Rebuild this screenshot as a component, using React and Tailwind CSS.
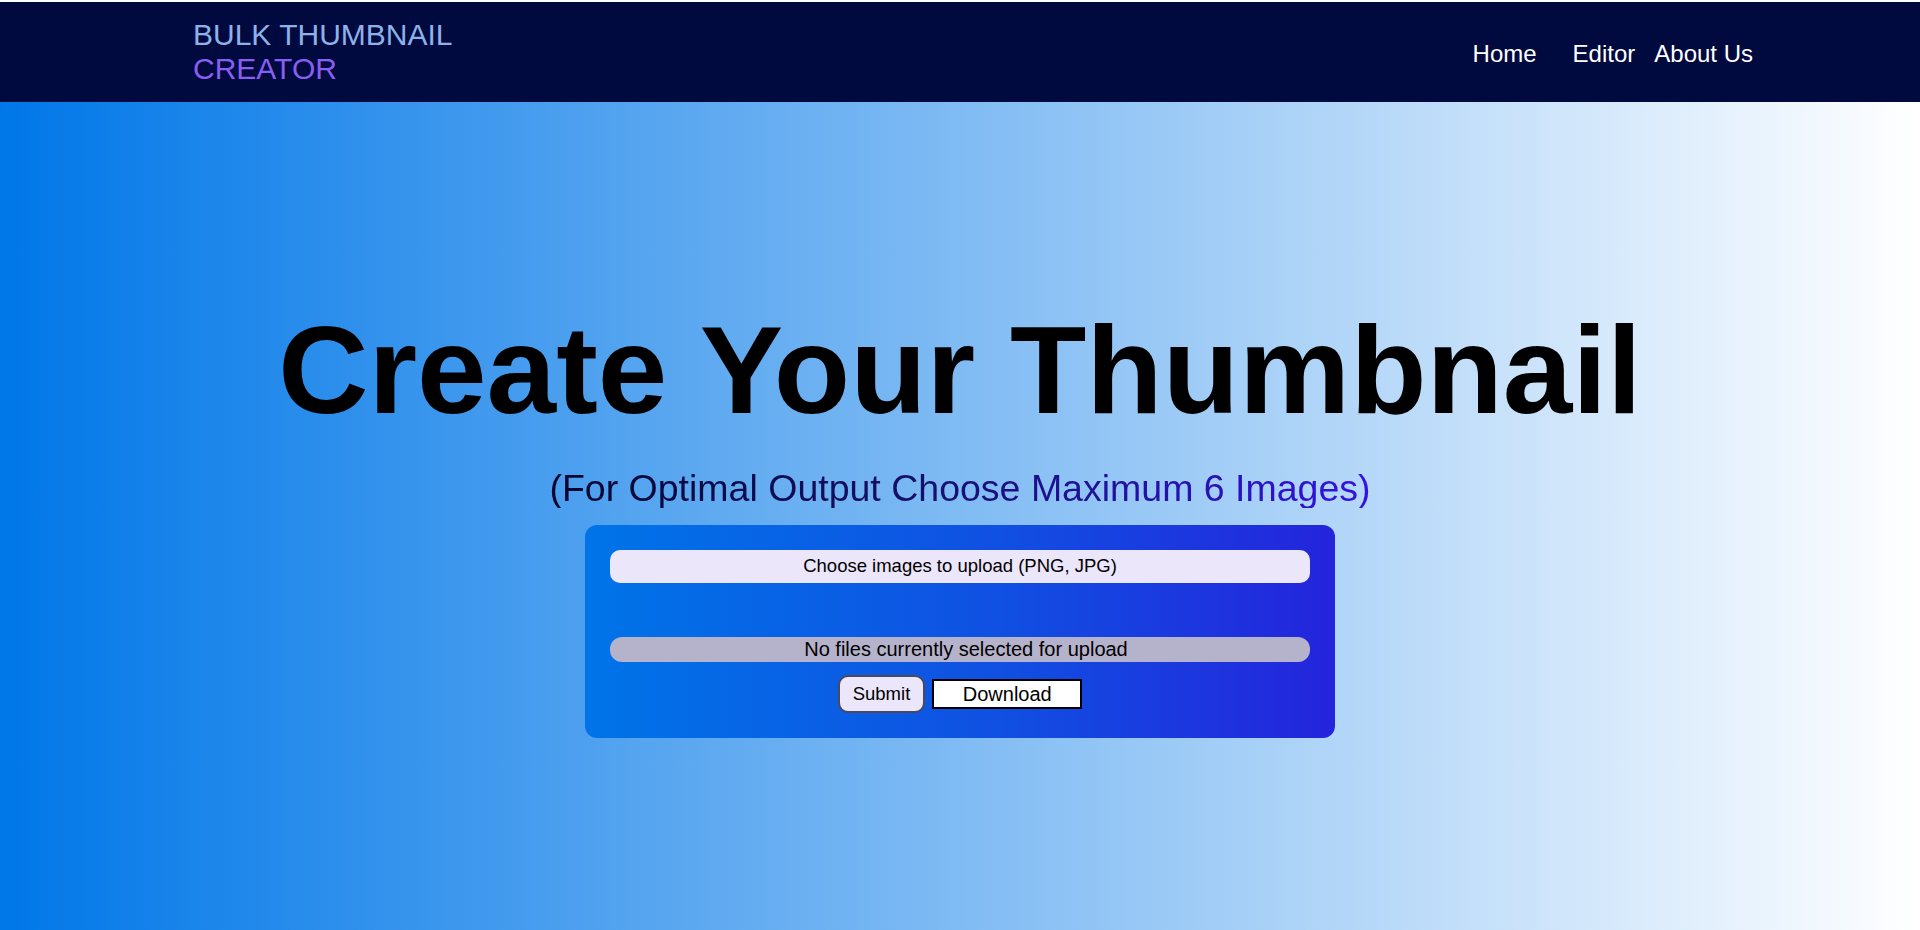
import React from 'react';

export default function App() {
  return (
    <div className="min-h-[930px] flex flex-col bg-white font-['Liberation_Sans',Arial,sans-serif]">
      {/* Top bar */}
      <header className="mt-[2px] h-[100px] shrink-0 bg-[#000a3e] flex items-center justify-between pl-[193px] pr-[167px]">
        <div className="text-[30px] leading-[34px]">
          <div className="text-[#8fb1ea]">BULK THUMBNAIL</div>
          <div className="text-[#8a5ef2]">CREATOR</div>
        </div>
        <nav className="mt-[4px] flex items-center text-white text-[24px]">
          <a href="#" className="mr-[36px]">Home</a>
          <a href="#" className="mr-[19px]">Editor</a>
          <a href="#">About Us</a>
        </nav>
      </header>

      {/* Hero */}
      <main className="flex-1 flex flex-col items-center pt-[205px] bg-[linear-gradient(to_right,#0077e8,#ffffff)]">
        <h1 className="text-[125px] leading-none font-bold text-black">Create Your Thumbnail</h1>
        <p className="mt-[38px] text-[37.5px] leading-none bg-[linear-gradient(to_right,#06062e,#15106a_45%,#3412e2)] bg-clip-text text-transparent">
          (For Optimal Output Choose Maximum 6 Images)
        </p>

        <div className="mt-[17px] w-[750px] rounded-[12px] p-[25px] bg-[linear-gradient(to_right,#0074e8,#1050e2_55%,#2424dc)] flex flex-col">
          <label className="h-[33px] w-full rounded-[10px] bg-[#ece6fb] flex items-center justify-center text-[18.5px] text-black cursor-pointer">
            Choose images to upload (PNG, JPG)
          </label>
          <div className="mt-[54px] h-[25px] w-full rounded-[12px] bg-[#b5b3cb] flex items-center justify-center pl-[12px] text-[20px] text-black">
            No files currently selected for upload
          </div>
          <div className="mt-[13px] flex items-center justify-center gap-[7px]">
            <button className="h-[38px] px-[13px] rounded-[10px] border-2 border-[#4a4a5c] bg-[#ece6fb] text-[18.5px] text-black">
              Submit
            </button>
            <button className="h-[30px] w-[150px] flex items-center justify-center leading-none border-2 border-black bg-white text-[20px] text-black">
              Download
            </button>
          </div>
        </div>
      </main>
    </div>
  );
}
